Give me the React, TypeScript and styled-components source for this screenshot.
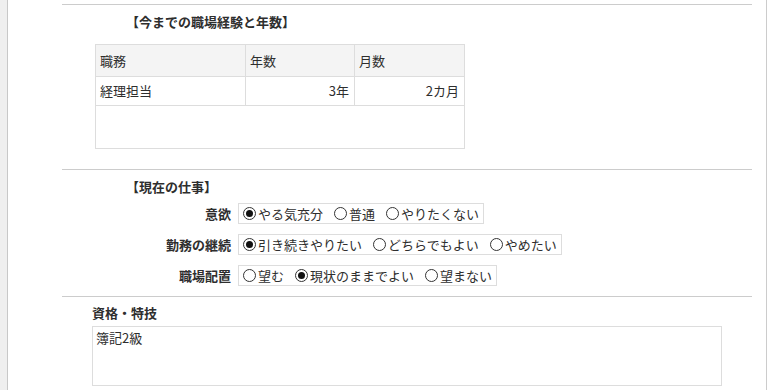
import React from 'react'
import styled, { createGlobalStyle } from 'styled-components'

const GlobalStyle = createGlobalStyle`
  html, body {
    margin: 0;
    padding: 0;
    background: #ffffff;
  }
  body {
    font-family: "Noto Sans CJK JP", "Noto Sans", sans-serif;
    font-size: 13px;
    color: #2e2e2e;
  }
`

const Frame = styled.div`
  display: flex;
  height: 390px;
  overflow: hidden;
`

const SideStrip = styled.div`
  width: 7px;
  flex: none;
  background: #efefef;
  border-right: 1px solid #c8c8c8;
`

const Panel = styled.div`
  width: 758px;
  flex: none;
  border-right: 1px solid #cccccc;
  padding-top: 4px;
`

const Section = styled.section`
  margin: 0 14px 0 54px;
  border-top: 1px solid #cccccc;
  padding: ${({ $pad }) => $pad};
`

const Title = styled.div`
  font-weight: bold;
  line-height: 18px;
  padding-left: ${({ $indent }) => $indent}px;
`

const Table = styled.table`
  border-collapse: collapse;
  margin: 13px 0 0 33px;
  table-layout: fixed;
  width: 370px;

  th, td {
    border: 1px solid #dddddd;
    padding: 0 5px 0 4px;
    font-weight: normal;
    line-height: 18px;
  }
  th {
    background: #f4f4f4;
    text-align: left;
    height: 31px;
  }
`

const Cell = styled.td`
  text-align: ${({ $align }) => $align || 'left'};
  height: ${({ $h }) => $h}px;
`

const RadioRows = styled.div`
  display: grid;
  grid-template-columns: 169px auto;
  column-gap: 7px;
  row-gap: 10px;
  margin-top: 7px;
  justify-items: start;
  align-items: center;
`

const FieldLabel = styled.div`
  justify-self: end;
  font-weight: bold;
  line-height: 18px;
`

const RadioBox = styled.div`
  display: flex;
  align-items: center;
  border: 1px solid #dddddd;
  padding: 0 4px;
  height: 19px;
`

const RadioItem = styled.label`
  display: inline-flex;
  align-items: center;
  gap: 2px;
  line-height: 18px;
  & + & {
    margin-left: 11px;
  }
`

const Dot = styled.span`
  width: 11px;
  height: 11px;
  border: 1px solid #333333;
  border-radius: 50%;
  display: inline-flex;
  align-items: center;
  justify-content: center;
  background: #ffffff;

  &::after {
    content: '';
    width: 7px;
    height: 7px;
    border-radius: 50%;
    background: ${({ $on }) => ($on ? '#111111' : 'transparent')};
  }
`

const Note = styled.div`
  margin: 4px 0 0 30px;
  width: 622px;
  height: 54px;
  border: 1px solid #dddddd;
  padding: 2px 3px;
  line-height: 18px;
`

const history = [{ job: '経理担当', years: '3年', months: '2カ月' }]

const questions = [
  { label: '意欲', options: ['やる気充分', '普通', 'やりたくない'], checked: 0 },
  { label: '勤務の継続', options: ['引き続きやりたい', 'どちらでもよい', 'やめたい'], checked: 0 },
  { label: '職場配置', options: ['望む', '現状のままでよい', '望まない'], checked: 1 },
]

const App = () => (
  <>
    <GlobalStyle />
    <Frame>
      <SideStrip />
      <Panel>
        <Section $pad="8px 0 20px 0">
          <Title $indent={64}>【今までの職場経験と年数】</Title>
          <Table>
            <colgroup>
              <col style={{ width: 150 }} />
              <col style={{ width: 109 }} />
              <col style={{ width: 110 }} />
            </colgroup>
            <thead>
              <tr>
                <th>職務</th>
                <th>年数</th>
                <th>月数</th>
              </tr>
            </thead>
            <tbody>
              {history.map((h) => (
                <tr key={h.job}>
                  <Cell $h={28}>{h.job}</Cell>
                  <Cell $h={28} $align="right">{h.years}</Cell>
                  <Cell $h={28} $align="right">{h.months}</Cell>
                </tr>
              ))}
              <tr>
                <Cell $h={42} colSpan={3} />
              </tr>
            </tbody>
          </Table>
        </Section>
        <Section $pad="8px 0 10px 0">
          <Title $indent={64}>【現在の仕事】</Title>
          <RadioRows>
            {questions.map((q) => (
              <React.Fragment key={q.label}>
                <FieldLabel>{q.label}</FieldLabel>
                <RadioBox>
                  {q.options.map((o, i) => (
                    <RadioItem key={o}>
                      <Dot $on={i === q.checked} />
                      {o}
                    </RadioItem>
                  ))}
                </RadioBox>
              </React.Fragment>
            ))}
          </RadioRows>
        </Section>
        <Section $pad="7px 0 0 0">
          <Title $indent={30}>資格・特技</Title>
          <Note>簿記2級</Note>
        </Section>
      </Panel>
    </Frame>
  </>
)

export default App
